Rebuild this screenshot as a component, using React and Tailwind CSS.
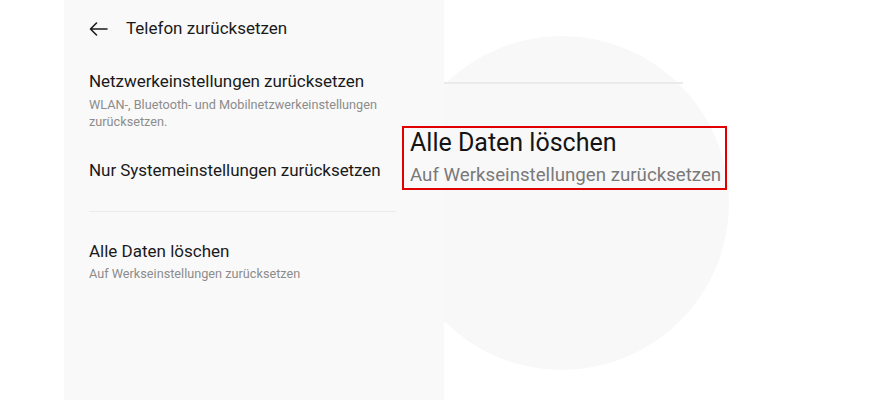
export default function App() {
  return (
    <div className="relative w-[879px] h-[400px] overflow-hidden bg-white font-['Roboto',sans-serif]">
      {/* magnifier circle */}
      <div className="absolute left-[395px] top-[36px] w-[334px] h-[334px] rounded-full bg-[#f8f8f8]">
        <div className="absolute left-[49px] top-[46px] w-[239px] h-[2px] bg-[#ebebeb]" />
      </div>

      <div className="relative z-10 ml-[64px] w-[380px] h-full bg-[#f9f9f9] pl-[25px] pr-[48px]">
        <div className="flex items-center h-[58px] gap-[18px]">
          <svg width="19" height="14" viewBox="0 0 19 14" fill="none" stroke="#1c1c1c" strokeWidth="1.6" strokeLinecap="round" strokeLinejoin="round">
            <path d="M18 7H1.5M7.5 1L1.5 7l6 6" />
          </svg>
          <span className="text-[17px] text-[#1a1a1a]">Telefon zurücksetzen</span>
        </div>

        <div className="mt-[12px]">
          <div className="text-[17px] leading-[22px] text-[#1a1a1a] tracking-[-0.05px]">Netzwerkeinstellungen zurücksetzen</div>
          <div className="mt-[4px] text-[12.7px] leading-[17px] text-[#8c8c8c]">
            WLAN-, Bluetooth- und Mobilnetzwerkeinstellungen zurücksetzen.
          </div>
        </div>

        <div className="mt-[29px] text-[17px] leading-[22px] text-[#1a1a1a] tracking-[-0.05px]">Nur Systemeinstellungen zurücksetzen</div>

        <div className="mt-[30px] h-[1px] bg-[#ebebeb]" />

        <div className="mt-[28px]">
          <div className="text-[17px] leading-[22px] text-[#1a1a1a]">Alle Daten löschen</div>
          <div className="mt-[3px] text-[12.7px] leading-[17px] text-[#8c8c8c]">Auf Werkseinstellungen zurücksetzen</div>
        </div>
      </div>

      {/* highlighted zoom box */}
      <div className="absolute z-20 left-[402px] top-[126px] w-[325px] h-[64px] border-2 border-[#e00000] pl-[6px]">
        <div className="text-[25px] leading-[30px] text-[#141414]">Alle Daten löschen</div>
        <div className="mt-[5px] text-[18.7px] leading-[24px] text-[#7a7a7a] whitespace-nowrap">Auf Werkseinstellungen zurücksetzen</div>
      </div>
    </div>
  );
}
